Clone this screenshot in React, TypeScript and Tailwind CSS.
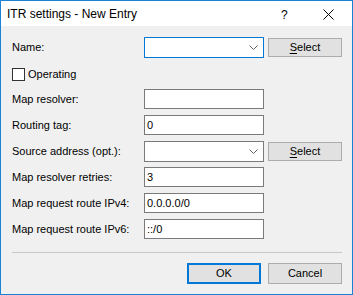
import React from 'react';

const font = { fontFamily: '"Liberation Sans", Arial, sans-serif' };

const Label: React.FC<{ text: string }> = ({ text }) => (
    <div className="w-[132px] shrink-0 text-[11px] leading-none text-black">{text}</div>
);

const TextBox: React.FC<{ value?: string }> = ({ value }) => (
    <div className="w-[120px] h-[20px] border border-[#7a7a7a] bg-white flex items-center pl-[2px] text-[11px] text-black">
        {value}
    </div>
);

const Combo: React.FC<{ focused?: boolean }> = ({ focused }) => (
    <div
        className={`w-[120px] h-[21px] border bg-white flex items-center justify-end pr-[5px] ${focused ? 'border-[#0078d7]' : 'border-[#7a7a7a]'
            }`}
    >
        <svg width="9" height="5" viewBox="0 0 9 5">
            <path d="M0.5 0.5 L4.5 4.5 L8.5 0.5" fill="none" stroke="#606060" strokeWidth="1" />
        </svg>
    </div>
);

const SelectButton: React.FC = () => (
    <div className="ml-[4px] w-[74px] h-[19px] border border-[#adadad] bg-[#e1e1e1] flex items-center justify-center text-[11px] text-black">
        <span>
            <span className="underline underline-offset-2">S</span>elect
        </span>
    </div>
);

export default function App() {
    return (
        <div style={font} className="w-[353px] h-[295px] border border-[#1883d7] bg-[#f0f0f0] flex flex-col">
            {/* Title bar */}
            <div className="h-[25px] bg-white flex items-center relative shrink-0">
                <span className="pl-[6px] text-[12px] text-black">ITR settings - New Entry</span>
                <span className="absolute left-[280px] top-[5px] text-[12px] text-black">?</span>
                <svg className="absolute left-[322px] top-[8px]" width="11" height="11" viewBox="0 0 11 11">
                    <path d="M0.5 0.5 L10.5 10.5 M10.5 0.5 L0.5 10.5" stroke="#000" strokeWidth="1" />
                </svg>
            </div>

            {/* Form */}
            <div className="flex flex-col pt-[11px] pl-[11px] pr-[10px]">
                <div className="h-[21px] flex items-center">
                    <Label text="Name:" />
                    <Combo focused />
                    <SelectButton />
                </div>

                <div className="mt-[10px] h-[13px] flex items-center">
                    <div className="w-[13px] h-[13px] border border-[#333333] bg-white" />
                    <span className="ml-[3px] text-[11px] text-black">Operating</span>
                </div>

                <div className="mt-[8px] h-[20px] flex items-center">
                    <Label text="Map resolver:" />
                    <TextBox />
                </div>
                <div className="mt-[6px] h-[20px] flex items-center">
                    <Label text="Routing tag:" />
                    <TextBox value="0" />
                </div>
                <div className="mt-[6px] h-[21px] flex items-center">
                    <Label text="Source address (opt.):" />
                    <Combo />
                    <SelectButton />
                </div>
                <div className="mt-[5px] h-[20px] flex items-center">
                    <Label text="Map resolver retries:" />
                    <TextBox value="3" />
                </div>
                <div className="mt-[6px] h-[20px] flex items-center">
                    <Label text="Map request route IPv4:" />
                    <TextBox value="0.0.0.0/0" />
                </div>
                <div className="mt-[6px] h-[20px] flex items-center">
                    <Label text="Map request route IPv6:" />
                    <TextBox value="::/0" />
                </div>

                {/* Separator */}
                <div className="mt-[13px] h-px w-[330px] bg-[#c8c8c8]" />

                {/* Buttons */}
                <div className="mt-[10px] flex justify-end gap-[7px]">
                    <div className="w-[74px] h-[21px] border-2 border-[#0078d7] bg-[#e1e1e1] flex items-center justify-center text-[11px] text-black">
                        OK
                    </div>
                    <div className="w-[74px] h-[21px] border border-[#adadad] bg-[#e1e1e1] flex items-center justify-center text-[11px] text-black">
                        Cancel
                    </div>
                </div>
            </div>
        </div>
    );
}
